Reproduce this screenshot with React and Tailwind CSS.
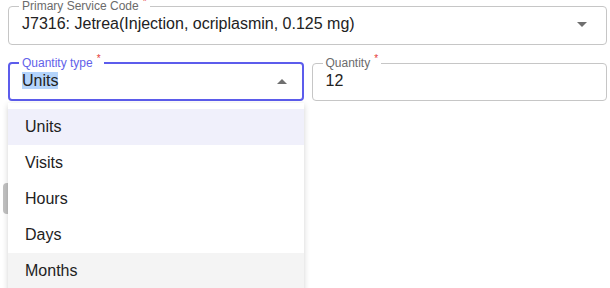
import { useState } from 'react';

function Caret({ up }) {
  return (
    <svg width="10" height="5" viewBox="0 0 10 5" className="shrink-0">
      <path d={up ? 'M0 5 L5 0 L10 5 Z' : 'M0 0 L10 0 L5 5 Z'} fill="#6f6f6f" />
    </svg>
  );
}

function Field({ label, focused, tall, children, right, className = '' }) {
  return (
    <fieldset
      className={`rounded-[4px] ${focused ? 'border-2 border-[#5c5cec] pl-[12px]' : 'border border-[#c6c6c6] pl-[13px]'} ${className}`}
    >
      <legend className={`-ml-[3px] h-[12px] px-[3px] text-[12px] leading-[12px] ${focused ? 'text-[#6262ea]' : 'text-[#6b6b6b]'}`}>
        {label}
        <span className="relative -top-[3px] ml-[4px] align-top text-[10px] leading-[10px] text-[#e53935]">*</span>
      </legend>
      <div className={`box-content flex h-[24px] items-center justify-between ${focused ? 'pb-[6px]' : tall ? 'pb-[8px]' : 'pb-[7px]'}`}>
        <div className="text-[16px] leading-[24px] text-[#222]">{children}</div>
        {right}
      </div>
    </fieldset>
  );
}

export default function App() {
  const [hovered] = useState('Months');
  const options = ['Units', 'Visits', 'Hours', 'Days', 'Months'];

  return (
    <div className="relative h-[288px] w-[610px] overflow-hidden bg-white pl-2 pr-[3px] font-['Liberation_Sans',Arial,sans-serif]">
      <Field label="Primary Service Code" tall className="pr-[19px]" right={<Caret />}>
        J7316: Jetrea(Injection, ocriplasmin, 0.125 mg)
      </Field>

      <div className="mt-[12px] grid grid-cols-2 gap-2">
        <Field label="Quantity type" focused className="pr-[15px]" right={<Caret up />}>
          <span className="bg-[#b4d4fb]">Units</span>
        </Field>
        <Field label="Quantity">12</Field>
      </div>

      <div className="mt-[82px] -ml-[5px]">
        <button className="h-[31px] w-[120px] rounded-[4px] bg-[#c2c2c2]" />
      </div>

      <ul className="absolute left-2 top-[103px] w-[296px] bg-white py-[6px] shadow-[0_2px_6px_rgba(0,0,0,0.18)]">
        {options.map(o => (
          <li
            key={o}
            className={`flex h-[36px] items-center pl-[17px] text-[16px] text-[#222] ${o === 'Units' ? 'bg-[#f0f0fb]' : o === hovered ? 'bg-[#f4f4f4]' : ''}`}
          >
            {o}
          </li>
        ))}
      </ul>
    </div>
  );
}
